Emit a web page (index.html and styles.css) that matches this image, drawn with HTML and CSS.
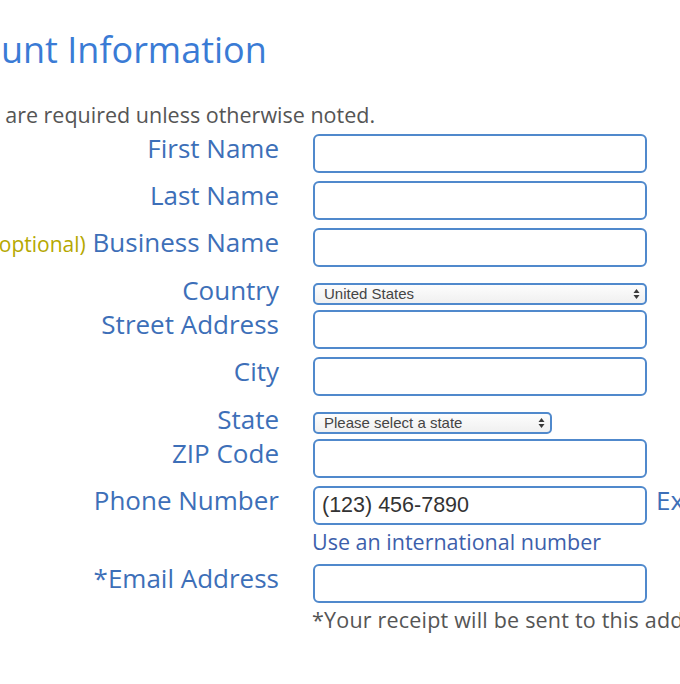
FILE: index.html
```html
<!DOCTYPE html>
<html lang="en">

<head>
  <meta charset="UTF-8">
  <meta name="viewport" content="width=device-width, initial-scale=1.0">
  <title>Account Information</title>
  <link rel="stylesheet" href="styles.css">
</head>

<body>
  <div class="page">
    <h1 class="title">Account Information</h1>
    <p class="intro">All fields are required unless otherwise noted.</p>

    <form class="form">
      <div class="row">
        <label class="label" for="first-name">First Name</label>
        <input class="field" id="first-name" type="text">
      </div>
      <div class="row">
        <label class="label" for="last-name">Last Name</label>
        <input class="field" id="last-name" type="text">
      </div>
      <div class="row">
        <label class="label" for="business"><span class="optional">(optional)</span> Business Name</label>
        <input class="field" id="business" type="text">
      </div>
      <div class="row row-select">
        <label class="label" for="country">Country</label>
        <span class="select-wrap">
          <select class="select" id="country">
            <option>United States</option>
          </select>
          <svg class="arrows" width="7" height="12" viewBox="0 0 7 12">
            <polygon points="0.5,5 3.5,1 6.5,5" />
            <polygon points="0.5,7 3.5,11 6.5,7" />
          </svg>
        </span>
      </div>
      <div class="row">
        <label class="label" for="street">Street Address</label>
        <input class="field" id="street" type="text">
      </div>
      <div class="row">
        <label class="label" for="city">City</label>
        <input class="field" id="city" type="text">
      </div>
      <div class="row row-select">
        <label class="label" for="state">State</label>
        <span class="select-wrap select-state">
          <select class="select" id="state">
            <option>Please select a state</option>
          </select>
          <svg class="arrows" width="7" height="12" viewBox="0 0 7 12">
            <polygon points="0.5,5 3.5,1 6.5,5" />
            <polygon points="0.5,7 3.5,11 6.5,7" />
          </svg>
        </span>
      </div>
      <div class="row">
        <label class="label" for="zip">ZIP Code</label>
        <input class="field" id="zip" type="text">
      </div>
      <div class="row row-phone">
        <label class="label" for="phone">Phone Number</label>
        <input class="field" id="phone" type="tel" value="(123) 456-7890">
        <label class="label-ext" for="ext">Ext.</label>
        <input class="field field-ext" id="ext" type="text">
      </div>
      <p class="hint"><a href="#">Use an international number</a></p>
      <div class="row row-email">
        <label class="label" for="email">*Email Address</label>
        <input class="field" id="email" type="email">
      </div>
      <p class="note">*Your receipt will be sent to this address.</p>
    </form>
  </div>
</body>

</html>
```

FILE: styles.css
```css
html,
body {
  margin: 0;
  overflow: hidden;
  background: #fff;
}

body {
  font-family: "Open Sans", "DejaVu Sans", sans-serif;
  width: 680px;
  height: 684px;
}

.page {
  margin-left: -78px;
  padding-top: 25px;
  width: 1000px;
}

.title {
  color: #3a7bd5;
  font-size: 36px;
  font-weight: 400;
  line-height: 49px;
  margin: 0;
}

.intro {
  color: #555;
  font-size: 21.5px;
  line-height: 29px;
  margin: 26px 0 0 -6px;
}

.form {
  margin-top: 5px;
}

.row {
  align-items: flex-start;
  display: flex;
  gap: 34px;
  margin-bottom: 8px;
}

.label {
  color: #3d6fb8;
  flex: 0 0 357px;
  font-size: 26px;
  line-height: 30px;
  margin-top: -1px;
  text-align: right;
  white-space: nowrap;
}

.optional {
  color: #b5a800;
  font-size: 21px;
}

.field {
  background: #fff;
  border: 2px solid #5089cc;
  border-radius: 6px;
  box-sizing: border-box;
  color: #333;
  flex: none;
  font-family: "Liberation Sans", Arial, sans-serif;
  font-size: 21.5px;
  height: 39px;
  margin: 0;
  outline: none;
  padding: 0 7px;
  width: 334px;
}

.row-select {
  margin-bottom: 5px;
}

.row-select .label {
  margin-top: 0;
}

.select-wrap {
  display: inline-block;
  flex: none;
  margin-top: 8px;
  position: relative;
}

.select {
  -webkit-appearance: none;
  appearance: none;
  background: linear-gradient(#fdfdfd, #f0f0f0);
  border: 2px solid #5089cc;
  border-radius: 5px;
  box-sizing: border-box;
  color: #444;
  display: block;
  font-family: "Liberation Sans", Arial, sans-serif;
  font-size: 15px;
  height: 22px;
  line-height: 18px;
  margin: 0;
  outline: none;
  padding: 0 0 0 9px;
  width: 334px;
}

.select-state .select {
  width: 239px;
}

.arrows {
  fill: #3a3a3a;
  pointer-events: none;
  position: absolute;
  right: 7px;
  top: 5px;
}

.row-phone {
  gap: 0;
  margin-bottom: 2px;
}

.row-phone .field {
  margin-left: 34px;
}

.label-ext {
  color: #3d6fb8;
  font-size: 26px;
  line-height: 30px;
  margin: -1px 0 0 9px;
}

.row-phone .field-ext {
  margin-left: 10px;
  width: 120px;
}

.hint {
  font-size: 21.5px;
  line-height: 29px;
  margin: 0 0 8px 390px;
}

.hint a {
  color: #3d5fab;
  text-decoration: none;
}

.row-email {
  margin-bottom: 2px;
}

.note {
  color: #555;
  font-size: 21.5px;
  letter-spacing: 0.2px;
  line-height: 29px;
  margin: 0 0 0 390px;
  white-space: nowrap;
}
```
